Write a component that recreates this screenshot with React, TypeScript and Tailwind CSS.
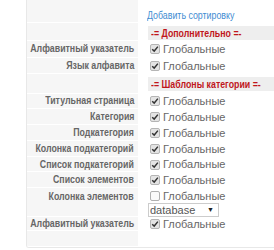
import type { ReactNode } from 'react';

type Row =
  | { kind: 'link'; h: number }
  | { kind: 'head'; h: number; title: string }
  | { kind: 'opt'; h: number; label: string; checked: boolean; select?: boolean }
  | { kind: 'empty'; h: number };

const ROWS: Row[] = [
  { kind: 'link', h: 23 },
  { kind: 'head', h: 18, title: '-= Дополнительно =-' },
  { kind: 'opt', h: 16.5, label: 'Алфавитный указатель', checked: true },
  { kind: 'opt', h: 16.5, label: 'Язык алфавита', checked: true },
  { kind: 'head', h: 19.5, title: '-= Шаблоны категории =-' },
  { kind: 'opt', h: 15.8, label: 'Титульная страница', checked: true },
  { kind: 'opt', h: 15.8, label: 'Категория', checked: true },
  { kind: 'opt', h: 15.8, label: 'Подкатегория', checked: true },
  { kind: 'opt', h: 15.8, label: 'Колонка подкатегорий', checked: true },
  { kind: 'opt', h: 15.8, label: 'Список подкатегорий', checked: true },
  { kind: 'opt', h: 15.8, label: 'Список элементов', checked: true },
  { kind: 'opt', h: 29, label: 'Колонка элементов', checked: false, select: true },
  { kind: 'opt', h: 14, label: 'Алфавитный указатель', checked: true },
  { kind: 'empty', h: 16 },
];

function Check({ checked }: { checked: boolean }) {
  return (
    <span
      className={
        'inline-flex h-[10px] w-[10px] items-center justify-center rounded-[2px] border ' +
        (checked ? 'border-[#b5b5b5] bg-[#e4e4e4]' : 'border-[#b0b0b0] bg-[#fafafa]')
      }
    >
      {checked && (
        <svg viewBox="0 0 10 10" className="h-[8px] w-[8px]">
          <path d="M1.5 5.2 L4 7.6 L8.6 2" fill="none" stroke="#333" strokeWidth="1.8" />
        </svg>
      )}
    </span>
  );
}

function Global({ checked }: { checked: boolean }) {
  return (
    <div className="flex h-[16px] items-center gap-[3px] pl-[2px]">
      <Check checked={checked} />
      <span className="text-[11px] text-[#666]">Глобальные</span>
    </div>
  );
}

function Cells({ left, right, h }: { left: ReactNode; right: ReactNode; h: number }) {
  return (
    <div className="flex" style={{ height: h }}>
      <div className="w-[111px] shrink-0 whitespace-nowrap border-b border-white bg-[#f6f6f6] pr-[4px] text-right text-[10px] font-bold text-[#666]">
        {left}
      </div>
      <div className="flex-1 whitespace-nowrap pl-[10px]">{right}</div>
    </div>
  );
}

export default function App() {
  return (
    <div className="h-[250px] w-[274px] overflow-hidden bg-white font-['Liberation_Sans',Arial,sans-serif]">
      <div className="ml-[26px] w-[248px] overflow-hidden rounded-bl-[3px] border-l border-b border-[#e8e8e8]">
        {ROWS.map((r, i) => {
          if (r.kind === 'link')
            return (
              <Cells
                key={i}
                h={r.h}
                left={null}
                right={
                  <div className="flex h-full items-center pt-[9px] text-[10.5px] text-[#3f8dd2]">
                    <span className="-ml-[1px] inline-block origin-left scale-x-[0.84]">Добавить сортировку</span>
                  </div>
                }
              />
            );
          if (r.kind === 'head')
            return (
              <Cells
                key={i}
                h={r.h}
                left={null}
                right={
                  <div className="mt-[3px] flex h-[14px] items-center bg-[#eeeeee] pl-[3px] text-[10px] font-bold text-[#c0161c]">
                    <span className="inline-block origin-left scale-x-[0.88]">{r.title}</span>
                  </div>
                }
              />
            );
          if (r.kind === 'empty') return <Cells key={i} h={r.h} left={null} right={null} />;
          if (r.select)
            return (
              <Cells
                key={i}
                h={r.h}
                left={
                  <div className="flex h-[16px] items-center justify-end">
                    <span className="inline-block origin-right scale-x-[0.88]">{r.label}</span>
                  </div>
                }
                right={
                  <div>
                    <Global checked={r.checked} />
                    <div className="-mt-[1px] flex h-[14px] w-[71px] items-center justify-between border border-[#ccc] bg-white pl-[1px] pr-[4px] text-[11px] text-[#555]">
                      <span>database</span>
                      <span className="text-[7px] text-[#222]">▼</span>
                    </div>
                  </div>
                }
              />
            );
          return (
            <Cells
              key={i}
              h={r.h}
              left={
                <div className="flex h-full items-center justify-end">
                  <span className="inline-block origin-right scale-x-[0.88]">{r.label}</span>
                </div>
              }
              right={
                <div className="flex h-full items-center">
                  <Global checked={r.checked} />
                </div>
              }
            />
          );
        })}
      </div>
    </div>
  );
}
